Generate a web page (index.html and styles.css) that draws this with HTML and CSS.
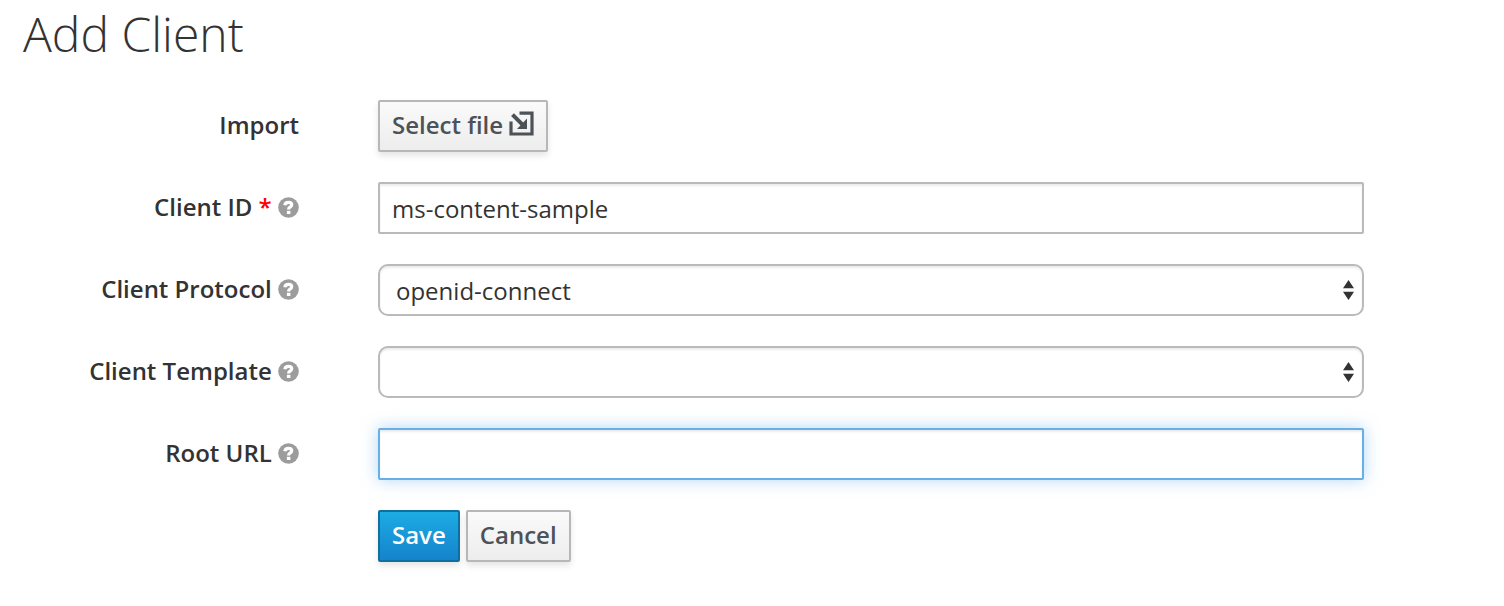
FILE: index.html
```html
<!DOCTYPE html>
<html lang="en">
<head>
<meta charset="utf-8">
<meta name="viewport" content="width=device-width, initial-scale=1">
<title>Add Client</title>
<link rel="stylesheet" href="styles.css">
</head>
<body>
<svg class="defs" aria-hidden="true">
  <symbol id="help" viewBox="0 0 21 21">
    <circle cx="10.5" cy="10.5" r="10.300" fill="#9c9c9c"/>
    <path d="M6.800 8.200Q7.200 5.300 10.500 5.300Q13.700 5.300 13.700 7.700Q13.700 9.200 12 10.100Q10.600 10.900 10.600 12.600" fill="none" stroke="#fff" stroke-width="3.200"/>
    <rect x="8.900" y="13.800" width="3.500" height="3.200" fill="#fff"/>
  </symbol>
  <symbol id="sort" viewBox="0 0 12 22">
    <path d="M6 0L12 9H0ZM0 13H12L6 22Z" fill="#333"/>
  </symbol>
</svg>
<main class="page">
  <h1 class="title">Add Client</h1>
  <form class="form">
    <div class="row">
      <label class="label" for="import">Import</label>
      <div class="control">
        <button class="btn" id="import" type="button">Select file
          <svg class="import-icon" viewBox="0 0 25 25" aria-hidden="true">
            <path d="M10.500 2.200H23V23H2V10.500" fill="none" stroke="currentColor" stroke-width="3.200"/>
            <path d="M3.500 3.700L14 14.200" stroke="currentColor" stroke-width="4"/>
            <path d="M18 7.500V18H8Z" fill="currentColor"/>
          </svg>
        </button>
      </div>
    </div>
    <div class="row">
      <label class="label" for="client-id">Client ID <span class="required">*</span> <svg class="help"><use href="#help"/></svg></label>
      <div class="control"><input class="field" id="client-id" type="text" value="ms-content-sample"></div>
    </div>
    <div class="row">
      <label class="label" for="protocol">Client Protocol <svg class="help"><use href="#help"/></svg></label>
      <div class="control">
        <select class="field select" id="protocol"><option>openid-connect</option><option>saml</option></select>
        <svg class="sort"><use href="#sort"/></svg>
      </div>
    </div>
    <div class="row">
      <label class="label" for="template">Client Template <svg class="help"><use href="#help"/></svg></label>
      <div class="control">
        <select class="field select" id="template"><option></option></select>
        <svg class="sort"><use href="#sort"/></svg>
      </div>
    </div>
    <div class="row">
      <label class="label" for="root-url">Root URL <svg class="help"><use href="#help"/></svg></label>
      <div class="control"><input class="field active" id="root-url" type="text"></div>
    </div>
    <div class="row">
      <div class="control actions">
        <button class="btn primary" type="submit">Save</button>
        <button class="btn" type="button">Cancel</button>
      </div>
    </div>
  </form>
</main>
</body>
</html>
```
FILE: styles.css
```css
* { box-sizing: border-box; }

body {
  margin: 0;
  background: #fff;
  color: #333;
  font: 24px/40px "Open Sans", "Noto Sans", sans-serif;
}

.defs { display: none; }

.page { padding: 8px 140px 44px 23px; }

.title {
  margin: 0 0 40px;
  font-size: 48px;
  font-weight: 300;
  line-height: 52px;
}

.form {
  display: grid;
  gap: 30px;
}

.row {
  display: grid;
  grid-template-columns: 276px minmax(0, 1fr);
  column-gap: 79px;
}

.label {
  padding: 5px 0;
  font-weight: 600;
  text-align: right;
}

.required { color: #f00; }

.help {
  width: 21px;
  height: 21px;
  vertical-align: -2px;
}

.control {
  position: relative;
  display: flex;
  grid-column: 2;
}

.actions { gap: 6px; }

.btn {
  display: flex;
  gap: 6px;
  height: 52px;
  padding: 3px 12px;
  border: 2px solid #b7b7b7;
  border-radius: 2px;
  background: linear-gradient(#fafafa, #ededed);
  box-shadow: 0 4px 6px rgba(3, 3, 3, 0.1);
  color: #4d5258;
  font: inherit;
  font-weight: 600;
}

.primary {
  border-color: #0f6f9f;
  background: linear-gradient(#1cace4, #1583cc);
  color: #fff;
}

.import-icon {
  width: 25px;
  height: 25px;
  margin-top: 6px;
}

.field {
  width: 100%;
  height: 52px;
  padding: 4px 12px;
  border: 2px solid #bababa;
  border-radius: 2px;
  outline: 0;
  background: #fff;
  box-shadow: inset 0 2px 2px rgba(3, 3, 3, 0.075);
  color: #333;
  font: inherit;
}

.select {
  padding: 5px 36px 3px 16px;
  border-radius: 10px;
  appearance: none;
}

.sort {
  position: absolute;
  top: 15px;
  right: 10px;
  width: 11px;
  height: 22px;
  pointer-events: none;
}

.active {
  border-color: #66afe9;
  box-shadow: inset 0 2px 2px rgba(3, 3, 3, 0.075), 0 0 16px rgba(102, 175, 233, 0.5);
}
```
